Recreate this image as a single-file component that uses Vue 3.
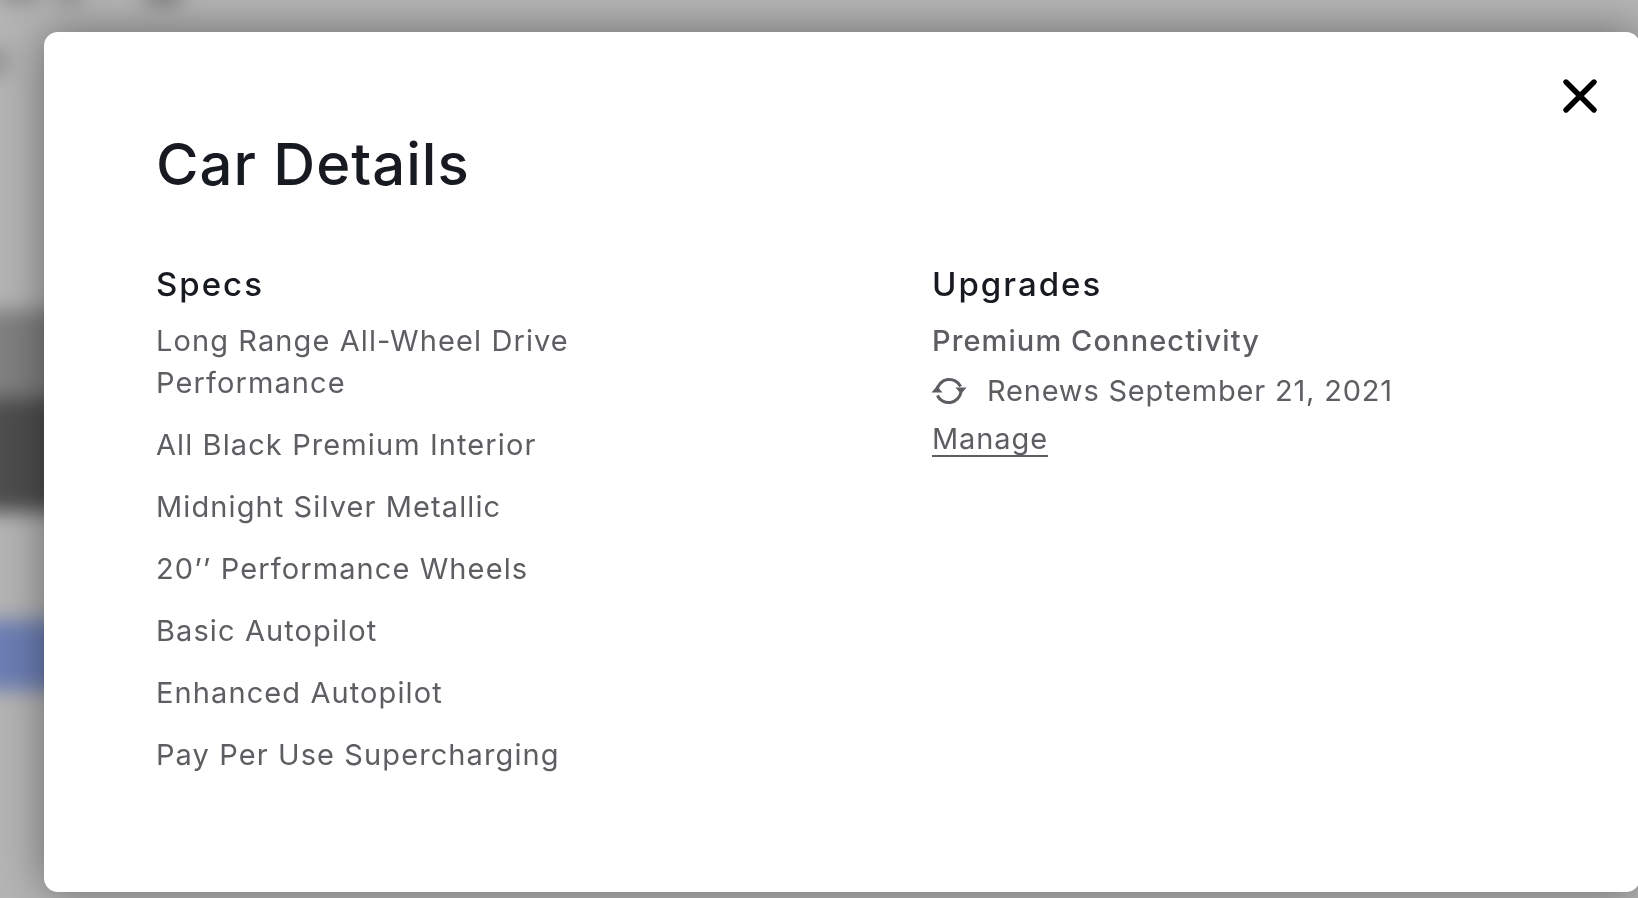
<template>
  <div class="page">
    <div class="backdrop">
      <div class="smudge top_a"></div>
      <div class="smudge top_b"></div>
      <div class="smudge top_c"></div>
      <div class="smudge left_mark"></div>
      <div class="smudge photo"></div>
      <div class="smudge photo_dark"></div>
      <div class="smudge blue_btn"></div>
    </div>
    <div class="modal">
      <button class="close_btn" aria-label="Close">
        <svg width="38" height="38" viewBox="0 0 38 38">
          <path d="M5 5L33 33M33 5L5 33" fill="none" stroke="#000" stroke-width="5.4" stroke-linecap="round" />
        </svg>
      </button>
      <h1 class="title">Car Details</h1>
      <div class="columns">
        <section class="specs">
          <h2 class="section_title">Specs</h2>
          <ul class="spec_list">
            <li v-for="item in specs" :key="item">{{ item }}</li>
          </ul>
        </section>
        <section class="upgrades">
          <h2 class="section_title">Upgrades</h2>
          <div class="upgrade_name">Premium Connectivity</div>
          <div class="renews">
            <svg class="renew_icon" width="36" height="30" viewBox="0 0 36 30">
              <path d="M6 14A12.5 12.5 0 0 1 29.6 10.5" fill="none" stroke="#5c5e62" stroke-width="3" />
              <path d="M30 16A12.5 12.5 0 0 1 6.4 19.5" fill="none" stroke="#5c5e62" stroke-width="3" />
              <path d="M24.5 11.5H35.5L30 18Z" fill="#5c5e62" />
              <path d="M0.5 16.5H11.5L6 10Z" fill="#5c5e62" />
            </svg>
            <span>Renews September 21, 2021</span>
          </div>
          <a class="manage" href="#">Manage</a>
        </section>
      </div>
    </div>
  </div>
</template>
<script setup>
const specs = [
  'Long Range All-Wheel Drive Performance',
  'All Black Premium Interior',
  'Midnight Silver Metallic',
  '20’’ Performance Wheels',
  'Basic Autopilot',
  'Enhanced Autopilot',
  'Pay Per Use Supercharging',
];
</script>
<style>
html,
body {
  margin: 0;
  overflow: hidden;
}
</style>
<style scoped>
* {
  box-sizing: border-box;
}
.page {
  position: relative;
  width: 1638px;
  height: 898px;
  overflow: hidden;
  background: #b5b5b5;
  font-family: 'Inter', 'Liberation Sans', sans-serif;
}
/* blurred page behind the modal */
.backdrop {
  position: absolute;
  inset: 0;
  filter: blur(10px);
}
.smudge {
  position: absolute;
}
.top_a {
  left: 0;
  top: -16px;
  width: 40px;
  height: 18px;
  background: #888;
}
.top_b {
  left: 55px;
  top: -16px;
  width: 28px;
  height: 18px;
  background: #888;
}
.top_c {
  left: 145px;
  top: -14px;
  width: 36px;
  height: 18px;
  background: #777;
}
.left_mark {
  left: -14px;
  top: 50px;
  width: 20px;
  height: 24px;
  background: #8a8a8a;
}
.photo {
  left: -20px;
  top: 310px;
  width: 120px;
  height: 100px;
  background: #808080;
}
.photo_dark {
  left: -20px;
  top: 398px;
  width: 120px;
  height: 114px;
  background: #4e4e4e;
}
.blue_btn {
  left: -20px;
  top: 620px;
  width: 120px;
  height: 70px;
  background: #6c7eb4;
}
.modal {
  position: relative;
  width: 1596px;
  height: 860px;
  margin: 32px 0 0 44px;
  padding: 100px 0 0 112px;
  background: #fff;
  border-radius: 14px;
  box-shadow: 0 0 46px rgba(0, 0, 0, 0.42);
}
.close_btn {
  position: absolute;
  left: 1517px;
  top: 45px;
  padding: 0;
  border: 0;
  background: none;
  line-height: 0;
}
.title {
  margin: 0;
  font-size: 58px;
  font-weight: 500;
  line-height: 64px;
  letter-spacing: 1px;
  color: #171a20;
}
.columns {
  display: grid;
  grid-template-columns: 776px 1fr;
  margin-top: 68px;
}
.section_title {
  margin: 0;
  font-size: 33px;
  font-weight: 500;
  line-height: 40px;
  letter-spacing: 2px;
  color: #171a20;
}
.spec_list {
  list-style: none;
  margin: 16px 0 0;
  padding: 0;
  width: 440px;
  display: flex;
  flex-direction: column;
  gap: 20px;
}
.spec_list li,
.upgrade_name,
.renews,
.manage {
  font-size: 29px;
  line-height: 42px;
  letter-spacing: 1.1px;
  color: #5c5e62;
}
.upgrade_name {
  margin-top: 16px;
  font-weight: 500;
}
.renews {
  display: flex;
  align-items: center;
  gap: 20px;
  margin-top: 8px;
  letter-spacing: 0.8px;
}
.renew_icon {
  flex: none;
  margin-left: -1px;
}
.manage {
  display: inline-block;
  margin-top: 10px;
  line-height: 33px;
  letter-spacing: 0.9px;
  text-decoration: none;
  border-bottom: 2px solid #5c5e62;
}
</style>
